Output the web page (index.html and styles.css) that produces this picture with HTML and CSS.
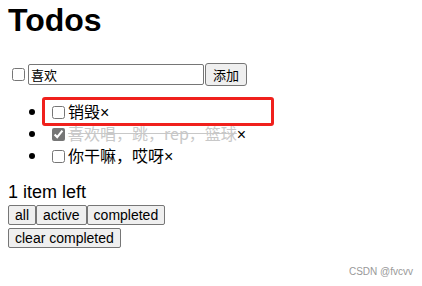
FILE: index.html
```html
<!DOCTYPE html>
<html>
    <head>
        <title>Todos</title>
        <meta charset="UTF-8">
        <link rel="stylesheet" href="styles.css">
    </head>
    <body>
        <h1 class="title">Todos</h1>
        <div class="new-todo">
            <input type="checkbox" class="toggle-all">
            <input type="text" class="todo-input" value="喜欢">
            <button class="add-btn">添加</button>
        </div>
        <ul class="todo-list">
            <!-- the first item carries the red highlight frame -->
            <li class="todo-item marked">
                <input type="checkbox"><span class="todo-text">销毁</span><span class="remove">×</span>
            </li>
            <li class="todo-item done">
                <input type="checkbox" checked><span class="todo-text">喜欢唱，跳，rep，篮球</span><span class="remove">×</span>
            </li>
            <li class="todo-item">
                <input type="checkbox"><span class="todo-text">你干嘛，哎呀</span><span class="remove">×</span>
            </li>
        </ul>
        <div class="footer">
            <div class="left-count">1 item left</div>
            <div class="filters">
                <button class="btn">all</button><button class="btn">active</button><button class="btn">completed</button>
            </div>
            <div class="clear-row">
                <button class="btn">clear completed</button>
            </div>
        </div>
        <div class="watermark">CSDN @fvcvv</div>
    </body>
</html>
```

FILE: styles.css
```css
body {
    margin: 0 8px;
    font-family: "Microsoft YaHei", "Noto Sans CJK SC", sans-serif;
    color: #000;
    background: #fff;
}
.title {
    margin: 0;
    padding-top: 2px;
    font-family: "Liberation Sans", Arial, sans-serif;
    font-size: 32px;
    font-weight: bold;
    line-height: 37px;
}
.new-todo {
    margin-top: 24px;
    display: flex;
    align-items: center;
    height: 23px;
}
.toggle-all {
    margin: 0 3px 0 4px;
    width: 13px;
    height: 13px;
}
.todo-input {
    width: 176px;
    height: 21px;
    box-sizing: border-box;
    padding: 0 2px;
    border: 1px solid #767676;
    border-radius: 2px;
    font: 13px "Noto Sans CJK SC", sans-serif;
}
.add-btn {
    height: 23px;
    margin-left: 1px;
    padding: 0 7px;
    border: 1px solid #767676;
    border-radius: 3px;
    background: #efefef;
    font: 13px "Noto Sans CJK SC", sans-serif;
}
.todo-list {
    margin: 14px 0 0;
    padding-left: 40px;
    list-style: disc;
}
.todo-item {
    height: 22px;
    line-height: 22px;
    font-size: 16px;
}
.todo-item input {
    margin: 0 3px 0 4px;
    width: 13px;
    height: 13px;
    vertical-align: -1px;
    accent-color: #767676;
}
.marked {
    position: relative;
}
.marked::after {
    content: "";
    position: absolute;
    left: -6px;
    top: -3px;
    right: 140px;
    bottom: -4px;
    border: 3px solid #f0201c;
    border-radius: 3px;
}
.done .todo-text {
    color: #c8c8c8;
    text-decoration: line-through;
}
.remove {
    font-family: "Liberation Sans", Arial, sans-serif;
    font-size: 16px;
}
.footer {
    margin-top: 15px;
    font-family: "Liberation Sans", Arial, sans-serif;
}
.left-count {
    font-size: 18px;
    line-height: 23px;
}
.btn {
    height: 20px;
    margin: 0;
    padding: 0 6px;
    border: 1px solid #767676;
    border-radius: 2px;
    background: #efefef;
    font: 14px "Liberation Sans", Arial, sans-serif;
    color: #000;
}
.filters {
    display: flex;
    margin-top: 1px;
}
.clear-row {
    margin-top: 3px;
}
.watermark {
    position: absolute;
    right: 9px;
    bottom: 9px;
    font: 10px "Liberation Sans", Arial, sans-serif;
    color: #999;
}
```
